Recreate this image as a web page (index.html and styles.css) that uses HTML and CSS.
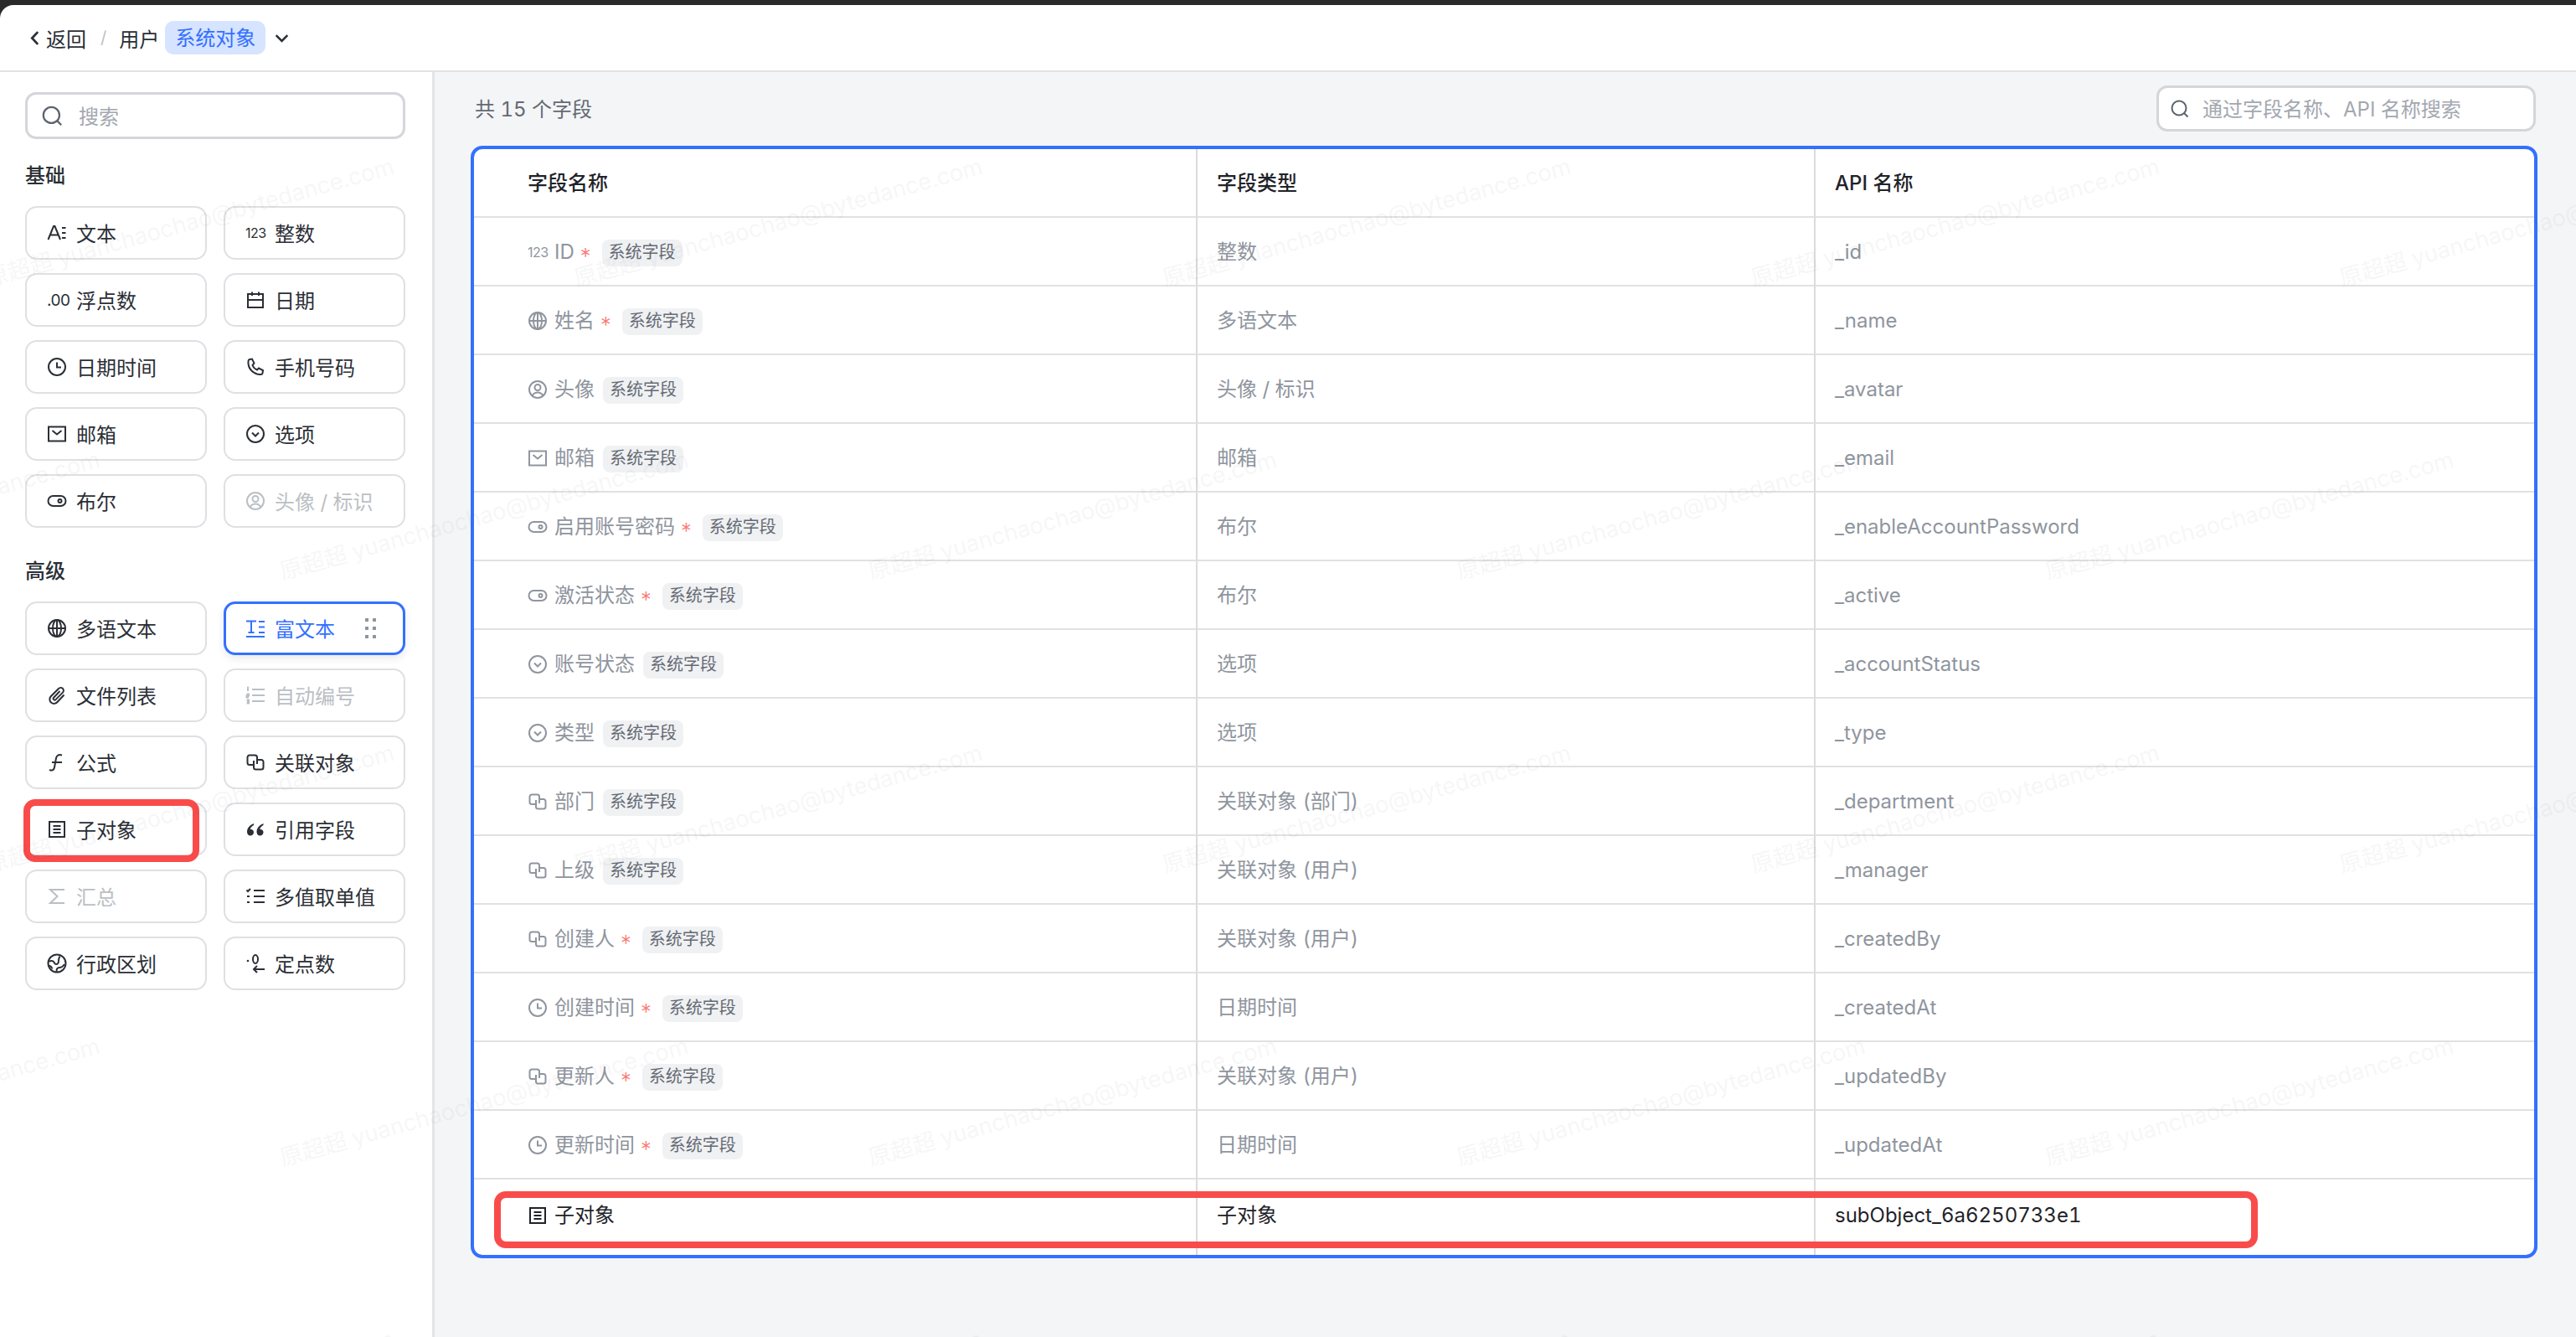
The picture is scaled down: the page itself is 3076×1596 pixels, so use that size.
FILE: index.html
```html
<!DOCTYPE html>
<html lang="zh-CN">
  <head>
    <meta charset="UTF-8" />
    <title>字段管理 - 系统对象</title>
    <link rel="stylesheet" href="styles.css">
  </head>
  <body>
    <svg class="icon-sprite" aria-hidden="true">
      <symbol id="i-search" viewBox="0 0 24 24"><circle cx="11" cy="11" r="8.5"/><path d="M17 17l4.500 4.500"/></symbol>
      <symbol id="i-text" viewBox="0 0 24 24"><path d="M1.500 20 8 4h1.500L16 20M4 14.500h9.500M18 6h4.500M18 12h4.500M18 18h4.500"/></symbol>
      <symbol id="i-cal" viewBox="0 0 24 24"><path d="M3 5h18v16H3zM3 12h18M8 2.500V7M16 2.500V7"/></symbol>
      <symbol id="i-clock" viewBox="0 0 24 24"><circle cx="12" cy="12" r="10"/><path d="M12 6.500v6h5"/></symbol>
      <symbol id="i-phone" viewBox="0 0 24 24"><path d="M5 3l3-.5 2.500 5-2 2.500c1 2.500 3 4.500 5.500 5.500l2-2 5 2.500-.5 3.500c-.2 1-1 1.500-2 1.500C10 21.500 2.500 14 3.500 5c.1-1 .7-1.800 1.500-2z"/></symbol>
      <symbol id="i-mail" viewBox="0 0 24 24"><path d="M2 3.500h20v17H2zM6.500 8l5.500 4.500L17.500 8"/></symbol>
      <symbol id="i-select" viewBox="0 0 24 24"><circle cx="12" cy="12" r="10"/><path d="M8 10.500l4 4 4-4"/></symbol>
      <symbol id="i-toggle" viewBox="0 0 24 24"><rect x="1.500" y="6" width="21" height="12" rx="6"/><circle cx="15.500" cy="12" r="2"/></symbol>
      <symbol id="i-avatar" viewBox="0 0 24 24"><circle cx="12" cy="12" r="10"/><circle cx="12" cy="9.500" r="3.500"/><path d="M5.500 19.500c1.500-3 4-4 6.500-4s5 1 6.500 4"/></symbol>
      <symbol id="i-globe" viewBox="0 0 24 24"><circle cx="12" cy="12" r="10"/><ellipse cx="12" cy="12" rx="5" ry="10"/><path d="M12 2v20M2 12h20"/></symbol>
      <symbol id="i-rich" viewBox="0 0 24 24"><path d="M1 3.500h12M7 3.500V17M3.500 17h7M16 4h7M16 10.500h7M16 17h7M1 22h22"/></symbol>
      <symbol id="i-clip" viewBox="0 0 24 24"><path d="M20.500 11.500l-8 8.500a5 5 0 0 1-8-6.500l9.500-9.500a3.300 3.300 0 0 1 5 4.600l-8.500 8.500a1.600 1.600 0 0 1-2.400-2.300L15.500 7"/></symbol>
      <symbol id="i-numlist" viewBox="0 0 24 24"><path d="M8 5h15M8 12h15M8 19h15M2 2.500h1V7M1.500 10.500h2.500v2H1.500v2h2.500M1.500 17.500h2.500v4H1.500M2 19.500h2"/></symbol>
      <symbol id="i-fx" viewBox="0 0 24 24"><path d="M3 21c3.500 1.500 5.500 0 6-3l2-11c.5-3 3-5 7-3.500M6 12h12"/></symbol>
      <symbol id="i-link" viewBox="0 0 24 24"><path d="M10 15H5a2.500 2.500 0 0 1-2.500-2.500V6A2.500 2.500 0 0 1 5 3.500h6.500A2.500 2.500 0 0 1 14 6v8"/><path d="M14 9h5a2.500 2.500 0 0 1 2.500 2.500V18a2.500 2.500 0 0 1-2.500 2.500h-6.500A2.500 2.500 0 0 1 10 18v-8"/></symbol>
      <symbol id="i-sub" viewBox="0 0 24 24"><path d="M3 3h18v18H3zM7.500 8h9M7.500 12h9M7.500 16h9"/></symbol>
      <symbol id="i-quote" viewBox="0 0 24 24"><path class="solid" d="M10 5C6 6.500 2 10 2 15c0 2.500 1.500 4.500 4 4.500s4-1.700 4-4-1.500-3.500-3.500-3.500c-.3 0-.6 0-.8.100.5-2 2-3.800 4.300-5z"/><path class="solid" d="M21.500 5c-4 1.500-8 5-8 10 0 2.500 1.500 4.500 4 4.500s4-1.700 4-4-1.500-3.500-3.500-3.500c-.3 0-.6 0-.8.100.5-2 2-3.800 4.300-5z"/></symbol>
      <symbol id="i-sigma" viewBox="0 0 24 24"><path d="M21 4H4l8.500 8L4 20h17"/></symbol>
      <symbol id="i-check" viewBox="0 0 24 24"><path d="M10 5h13M10 12h13M10 19h13M2 12h3M2 19h3M1.500 4.500l1.500 1.500 3-3"/></symbol>
      <symbol id="i-region" viewBox="0 0 24 24"><circle cx="12" cy="12" r="10.500"/><path d="M3 9.500c3-1.500 5 0 6 2s3.500 2 4.500 0-.5-4 2-8M12 22.500c-1.500-3 .5-5.500 3-5.500s4-1 6-4M2 15c2-.5 3.500 1 4.500 3.500"/></symbol>
      <symbol id="i-decimal" viewBox="0 0 24 24"><circle class="solid" cx="3" cy="9" r="1.300"/><ellipse cx="12" cy="7" rx="3" ry="5"/><path d="M23 19H10M14 15l-4 4 4 4"/></symbol>
    </svg>

    <div class="app">
      <header class="topbar">
        <a class="back" href="#"><svg class="chev-left" viewBox="0 0 12 20"><path d="M10 2 2.500 10l7.500 8"/></svg>返回</a>
        <span class="crumb-sep">/</span>
        <span class="crumb">用户</span>
        <span class="crumb-tag">系统对象</span>
        <svg class="chev-down" viewBox="0 0 20 12"><path d="M2 2l8 8 8-8"/></svg>
      </header>

      <div class="layout">
        <aside class="sidebar">
          <div class="search side-search">
            <svg class="icon"><use href="#i-search"/></svg>
            <span>搜索</span>
          </div>

          <h4 class="group-title">基础</h4>
          <div class="field-grid">
            <div class="field-btn"><svg class="icon"><use href="#i-text"/></svg><span>文本</span></div>
            <div class="field-btn"><i class="icon-num">123</i><span>整数</span></div>
            <div class="field-btn"><i class="icon-num wide">.00</i><span>浮点数</span></div>
            <div class="field-btn"><svg class="icon"><use href="#i-cal"/></svg><span>日期</span></div>
            <div class="field-btn"><svg class="icon"><use href="#i-clock"/></svg><span>日期时间</span></div>
            <div class="field-btn"><svg class="icon"><use href="#i-phone"/></svg><span>手机号码</span></div>
            <div class="field-btn"><svg class="icon"><use href="#i-mail"/></svg><span>邮箱</span></div>
            <div class="field-btn"><svg class="icon"><use href="#i-select"/></svg><span>选项</span></div>
            <div class="field-btn"><svg class="icon"><use href="#i-toggle"/></svg><span>布尔</span></div>
            <div class="field-btn disable"><svg class="icon"><use href="#i-avatar"/></svg><span>头像 / 标识</span></div>
          </div>

          <h4 class="group-title second">高级</h4>
          <div class="field-grid">
            <div class="field-btn"><svg class="icon"><use href="#i-globe"/></svg><span>多语文本</span></div>
            <div class="field-btn active">
              <svg class="icon"><use href="#i-rich"/></svg><span>富文本</span>
              <div class="drag-dots"><b></b><b></b><b></b><b></b><b></b><b></b></div>
            </div>
            <div class="field-btn"><svg class="icon"><use href="#i-clip"/></svg><span>文件列表</span></div>
            <div class="field-btn disable"><svg class="icon"><use href="#i-numlist"/></svg><span>自动编号</span></div>
            <div class="field-btn"><svg class="icon"><use href="#i-fx"/></svg><span>公式</span></div>
            <div class="field-btn"><svg class="icon"><use href="#i-link"/></svg><span>关联对象</span></div>
            <div class="field-btn"><svg class="icon"><use href="#i-sub"/></svg><span>子对象</span><div class="mark mark-side"></div></div>
            <div class="field-btn"><svg class="icon"><use href="#i-quote"/></svg><span>引用字段</span></div>
            <div class="field-btn disable"><svg class="icon"><use href="#i-sigma"/></svg><span>汇总</span></div>
            <div class="field-btn"><svg class="icon"><use href="#i-check"/></svg><span>多值取单值</span></div>
            <div class="field-btn"><svg class="icon"><use href="#i-region"/></svg><span>行政区划</span></div>
            <div class="field-btn"><svg class="icon"><use href="#i-decimal"/></svg><span>定点数</span></div>
          </div>
        </aside>

        <main class="content">
          <div class="toolbar">
            <span class="total">共 15 个字段</span>
            <div class="search table-search">
              <svg class="icon"><use href="#i-search"/></svg>
              <span>通过字段名称、API 名称搜索</span>
            </div>
          </div>

          <div class="table-wrap">
            <table class="fields">
              <colgroup><col class="col-name"><col class="col-type"><col></colgroup>
              <thead>
                <tr><th class="name-cell">字段名称</th><th>字段类型</th><th>API 名称</th></tr>
              </thead>
              <tbody>
                <tr>
                  <td><div class="name-cell"><i class="icon-num">123</i><span class="label">ID</span><em>*</em><small>系统字段</small></div></td>
                  <td>整数</td><td>_id</td>
                </tr>
                <tr>
                  <td><div class="name-cell"><svg class="icon"><use href="#i-globe"/></svg><span class="label">姓名</span><em>*</em><small>系统字段</small></div></td>
                  <td>多语文本</td><td>_name</td>
                </tr>
                <tr>
                  <td><div class="name-cell"><svg class="icon"><use href="#i-avatar"/></svg><span class="label">头像</span><small>系统字段</small></div></td>
                  <td>头像 / 标识</td><td>_avatar</td>
                </tr>
                <tr>
                  <td><div class="name-cell"><svg class="icon"><use href="#i-mail"/></svg><span class="label">邮箱</span><small>系统字段</small></div></td>
                  <td>邮箱</td><td>_email</td>
                </tr>
                <tr>
                  <td><div class="name-cell"><svg class="icon"><use href="#i-toggle"/></svg><span class="label">启用账号密码</span><em>*</em><small>系统字段</small></div></td>
                  <td>布尔</td><td>_enableAccountPassword</td>
                </tr>
                <tr>
                  <td><div class="name-cell"><svg class="icon"><use href="#i-toggle"/></svg><span class="label">激活状态</span><em>*</em><small>系统字段</small></div></td>
                  <td>布尔</td><td>_active</td>
                </tr>
                <tr>
                  <td><div class="name-cell"><svg class="icon"><use href="#i-select"/></svg><span class="label">账号状态</span><small>系统字段</small></div></td>
                  <td>选项</td><td>_accountStatus</td>
                </tr>
                <tr>
                  <td><div class="name-cell"><svg class="icon"><use href="#i-select"/></svg><span class="label">类型</span><small>系统字段</small></div></td>
                  <td>选项</td><td>_type</td>
                </tr>
                <tr>
                  <td><div class="name-cell"><svg class="icon"><use href="#i-link"/></svg><span class="label">部门</span><small>系统字段</small></div></td>
                  <td>关联对象 (部门)</td><td>_department</td>
                </tr>
                <tr>
                  <td><div class="name-cell"><svg class="icon"><use href="#i-link"/></svg><span class="label">上级</span><small>系统字段</small></div></td>
                  <td>关联对象 (用户)</td><td>_manager</td>
                </tr>
                <tr>
                  <td><div class="name-cell"><svg class="icon"><use href="#i-link"/></svg><span class="label">创建人</span><em>*</em><small>系统字段</small></div></td>
                  <td>关联对象 (用户)</td><td>_createdBy</td>
                </tr>
                <tr>
                  <td><div class="name-cell"><svg class="icon"><use href="#i-clock"/></svg><span class="label">创建时间</span><em>*</em><small>系统字段</small></div></td>
                  <td>日期时间</td><td>_createdAt</td>
                </tr>
                <tr>
                  <td><div class="name-cell"><svg class="icon"><use href="#i-link"/></svg><span class="label">更新人</span><em>*</em><small>系统字段</small></div></td>
                  <td>关联对象 (用户)</td><td>_updatedBy</td>
                </tr>
                <tr>
                  <td><div class="name-cell"><svg class="icon"><use href="#i-clock"/></svg><span class="label">更新时间</span><em>*</em><small>系统字段</small></div></td>
                  <td>日期时间</td><td>_updatedAt</td>
                </tr>
                <tr class="new-row">
                  <td><div class="name-cell"><svg class="icon"><use href="#i-sub"/></svg><span class="label">子对象</span></div></td>
                  <td>子对象</td><td>subObject_6a6250733e1</td>
                </tr>
              </tbody>
            </table>
            <div class="mark mark-row"></div>
          </div>
        </main>
      </div>

      <svg class="watermark" aria-hidden="true">
        <defs>
          <pattern id="wm" width="702.67" height="700" patternUnits="userSpaceOnUse" patternTransform="translate(-24 130)">
            <text x="10" y="212" transform="rotate(-15.5 10 212)">原超超 yuanchaochao@bytedance.com</text>
            <text x="361.33" y="562" transform="rotate(-15.5 361.33 562)">原超超 yuanchaochao@bytedance.com</text>
            <text x="-341.33" y="562" transform="rotate(-15.5 -341.33 562)">原超超 yuanchaochao@bytedance.com</text>
          </pattern>
        </defs>
        <rect width="100%" height="100%" fill="url(#wm)"/>
      </svg>
    </div>
  </body>
</html>
```

FILE: styles.css
```css
* {
  box-sizing: border-box;
}

html,
body {
  margin: 0;
  height: 100%;
}

body {
  background: #2a2a2a;
  color: #2b2f36;
  font-family: Inter, "Noto Sans CJK SC", sans-serif;
  font-size: 24px;
  font-variant-numeric: tabular-nums;
  padding-top: 6px;
  overflow: hidden;
}

.icon-sprite {
  display: none;
}

.icon {
  width: 24px;
  height: 24px;
  flex: none;
  fill: none;
  stroke: currentColor;
  stroke-width: 2;
}

.solid {
  fill: currentColor;
  stroke: none;
}

.icon-num {
  width: 24px;
  flex: none;
  font-style: normal;
  font-size: 16px;
  font-variant-numeric: normal;
  letter-spacing: -0.5px;
  white-space: nowrap;
}

.icon-num.wide {
  font-size: 19px;
}

.app {
  position: relative;
  height: 1590px;
  background: #fff;
  border-top-left-radius: 16px;
  overflow: hidden;
}

/* top bar */
.topbar {
  height: 80px;
  display: flex;
  align-items: center;
  padding-left: 36px;
  border-bottom: 2px solid #e1e2e6;
}

.back {
  display: flex;
  align-items: center;
  color: #2b2f36;
  text-decoration: none;
}

.chev-left {
  width: 11px;
  height: 19px;
  margin-right: 8px;
  fill: none;
  stroke: #2b2f36;
  stroke-width: 3;
}

.crumb-sep {
  margin: 0 15px 0 17px;
  color: #bbbfc4;
  font-size: 20px;
}

.crumb-tag {
  margin-left: 7px;
  padding: 0 12px;
  height: 40px;
  line-height: 41px;
  background: #d6e4ff;
  color: #3370ff;
  border-radius: 10px;
}

.chev-down {
  width: 17px;
  height: 11px;
  margin-left: 11px;
  fill: none;
  stroke: #2b2f36;
  stroke-width: 3;
}

/* page */
.layout {
  display: flex;
  height: 1510px;
}

.sidebar {
  width: 519px;
  flex: none;
  padding: 24px 32px 0 30px;
  border-right: 3px solid #e4e5e8;
}

.search {
  display: flex;
  align-items: center;
  background: #fff;
  border: 3px solid #d4d6da;
  border-radius: 13px;
  color: #a3a8b0;
}

.search .icon {
  color: #5c6470;
}

.search span {
  margin-top: -2px;
}

.side-search {
  height: 56px;
  padding-left: 16px;
  gap: 18px;
}

.side-search .icon {
  width: 27px;
  height: 27px;
}

.group-title {
  height: 32px;
  line-height: 32px;
  margin: 28px 0 20px;
  font-size: 24px;
  font-weight: 500;
}

.group-title.second {
  margin-top: 36px;
}

.field-grid {
  display: grid;
  grid-template-columns: 217px 217px;
  column-gap: 20px;
  row-gap: 16px;
}

.field-btn {
  position: relative;
  height: 64px;
  display: flex;
  align-items: center;
  gap: 11px;
  padding-left: 24px;
  border: 2px solid #dfe0e4;
  border-radius: 14px;
  background: #fff;
}

.field-btn span {
  margin-top: -1px;
}

.field-btn.disable {
  color: #bbbfc4;
}

.field-btn.active {
  border: 3px solid #3370ff;
  color: #3370ff;
  padding-left: 23px;
  box-shadow: 0 4px 10px rgba(31, 35, 41, 0.1);
}

.drag-dots {
  position: absolute;
  right: 32px;
  top: 17px;
  width: 13px;
  display: grid;
  grid-template-columns: 4px 4px;
  justify-content: space-between;
  row-gap: 6px;
}

.drag-dots b {
  height: 4px;
  background: #8f959e;
}

.mark {
  position: absolute;
  border: 8px solid #f94c4a;
  border-radius: 14px;
  pointer-events: none;
}

.mark-side {
  left: -4px;
  top: -6px;
  width: 210px;
  height: 75px;
}

/* table side */
.content {
  flex: 1;
  min-width: 0;
  padding: 16px 46px 0 43px;
  background: #f4f5f7;
}

.toolbar {
  height: 55px;
  margin-bottom: 17px;
  padding-right: 2px;
  display: flex;
  align-items: center;
  justify-content: space-between;
}

.total {
  margin: -2px 0 0 5px;
  color: #646a73;
}

.table-search {
  width: 453px;
  height: 55px;
  padding-left: 13px;
  gap: 15px;
}

.table-wrap {
  position: relative;
  height: 1328px;
  background: #fff;
  border: 4px solid #3370ff;
  border-radius: 14px;
  overflow: hidden;
}

.fields {
  width: 100%;
  height: 100%;
  border-collapse: separate;
  border-spacing: 0;
  table-layout: fixed;
}

.col-name {
  width: 864px;
}

.col-type {
  width: 738px;
}

.fields th,
.fields td {
  height: 82px;
  padding: 2px 0 0 23px;
  border-bottom: 2px solid #e0e1e3;
  border-right: 2px solid #dadbdd;
  text-align: left;
  line-height: 32px;
  font-weight: 400;
  color: #8f959e;
}

.fields th {
  font-weight: 500;
  color: #1f2329;
}

.fields th:last-child,
.fields td:last-child {
  border-right: 0;
}

.fields td:first-child,
.fields th.name-cell {
  padding-left: 64px;
}

.name-cell {
  white-space: nowrap;
}

td .name-cell {
  display: flex;
  align-items: center;
  gap: 10px;
}

td .name-cell .icon,
td .name-cell .icon-num {
  margin-right: -2px;
}

.label {
  color: #8f959e;
}

.name-cell em {
  font-style: normal;
  font-weight: 300;
  color: #fa7a76;
  font-size: 26px;
  line-height: 1;
  margin: 10px 1px 0 -5px;
}

.name-cell small {
  height: 32px;
  line-height: 31px;
  margin-top: 1px;
  padding: 0 8px;
  font-size: 20px;
  color: #646a73;
  background: #f0f1f3;
  border-radius: 8px;
}

.new-row td {
  height: 90px;
  padding-top: 27px;
  vertical-align: top;
  border-bottom: 0;
  color: #1f2329;
}

.new-row .label {
  color: #1f2329;
}

.mark-row {
  left: 24px;
  bottom: 8px;
  width: 2106px;
  height: 68px;
}

/* watermark lies over the whole page */
.watermark {
  position: absolute;
  left: 0;
  top: -6px;
  width: 100%;
  height: 1596px;
  pointer-events: none;
}

.watermark text {
  font-family: Inter, "Noto Sans CJK SC", sans-serif;
  font-size: 27.3px;
  fill: rgba(31, 35, 41, 0.04);
}
```
